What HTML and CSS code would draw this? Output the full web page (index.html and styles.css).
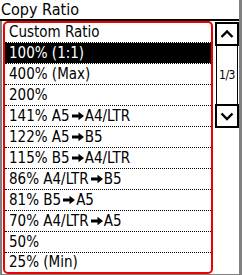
FILE: index.html
```html
<!DOCTYPE html>
<html>
<head>
<meta charset="utf-8">
<link rel="stylesheet" href="styles.css">
</head>
<body>
<div class="screen">
  <div class="title">Copy Ratio</div>
  <div class="main">
    <div class="list">
      <div class="row first">Custom Ratio</div>
      <div class="row selected">100% (1:1)</div>
      <div class="row">400% (Max)</div>
      <div class="row">200%</div>
      <div class="row">141% A5<svg class="arrow" viewBox="0 0 12 10"><path d="M0 3.6H6.5V0.8L12 5L6.5 9.2V6.4H0Z"/></svg>A4/LTR</div>
      <div class="row">122% A5<svg class="arrow" viewBox="0 0 12 10"><path d="M0 3.6H6.5V0.8L12 5L6.5 9.2V6.4H0Z"/></svg>B5</div>
      <div class="row">115% B5<svg class="arrow" viewBox="0 0 12 10"><path d="M0 3.6H6.5V0.8L12 5L6.5 9.2V6.4H0Z"/></svg>A4/LTR</div>
      <div class="row">86% A4/LTR<svg class="arrow" viewBox="0 0 12 10"><path d="M0 3.6H6.5V0.8L12 5L6.5 9.2V6.4H0Z"/></svg>B5</div>
      <div class="row">81% B5<svg class="arrow" viewBox="0 0 12 10"><path d="M0 3.6H6.5V0.8L12 5L6.5 9.2V6.4H0Z"/></svg>A5</div>
      <div class="row">70% A4/LTR<svg class="arrow" viewBox="0 0 12 10"><path d="M0 3.6H6.5V0.8L12 5L6.5 9.2V6.4H0Z"/></svg>A5</div>
      <div class="row">50%</div>
      <div class="row last">25% (Min)</div>
    </div>
    <div class="scroll">
      <div class="btn">
        <svg width="20" height="20" viewBox="0 0 20 20"><polyline points="4.5,13 10,7.5 15.5,13" fill="none" stroke="#000" stroke-width="2.4"/></svg>
      </div>
      <div class="track"><span class="page">1/3</span></div>
      <div class="btn">
        <svg width="20" height="20" viewBox="0 0 20 20"><polyline points="4.5,7.5 10,13 15.5,7.5" fill="none" stroke="#000" stroke-width="2.4"/></svg>
      </div>
    </div>
  </div>
</div>
</body>
</html>
```
FILE: styles.css
```css
* { box-sizing: border-box; }
html, body { margin: 0; padding: 0; background: #fff; }
body {
  font-family: "DejaVu Sans Condensed", "DejaVu Sans", sans-serif;
  font-stretch: condensed;
  color: #000;
}
.screen {
  width: 242px;
  height: 275px;
  border-right: 3px solid #808080;
  display: flex;
  flex-direction: column;
}
.title {
  height: 21px;
  line-height: 19px;
  font-size: 16px;
  padding-left: 1px;
  border-bottom: 2px solid #000;
  white-space: nowrap;
}
.main {
  flex: 1;
  display: flex;
  border-left: 2px solid #808080;
  border-bottom: 1px solid #808080;
}
.list {
  margin-left: 1px;
  width: 210px;
  height: 253px;
  border: 2px solid #ee0000;
  border-radius: 5px;
  display: flex;
  flex-direction: column;
}
.row {
  height: 21px;
  line-height: 20px;
  font-size: 15px;
  padding-left: 4px;
  border-top: 1px dotted #000;
  white-space: nowrap;
}
.row.first {
  height: 19px;
  line-height: 19px;
  border-top: none;
}
.row.last {
  height: 20px;
  line-height: 19px;
}
.row.selected {
  background: #000;
  color: #fff;
  background-clip: content-box;
  padding-left: 0;
  text-indent: 4px;
}
.arrow {
  width: 12px;
  height: 10px;
  margin: 0 1px 0 2px;
  vertical-align: 0px;
  fill: #000;
}
.scroll {
  margin-left: 2px;
  margin-top: 1px;
  width: 24px;
  display: flex;
  flex-direction: column;
}
.btn {
  width: 24px;
  height: 24px;
  border: 2px solid #000;
  display: flex;
  align-items: center;
  justify-content: center;
}
.track {
  margin-left: 1px;
  width: 22px;
  height: 58px;
  border-left: 1px solid #000;
  border-right: 1px solid #000;
  display: flex;
  align-items: center;
  justify-content: center;
}
.page {
  font-size: 12px;
  letter-spacing: -0.5px;
}
```
